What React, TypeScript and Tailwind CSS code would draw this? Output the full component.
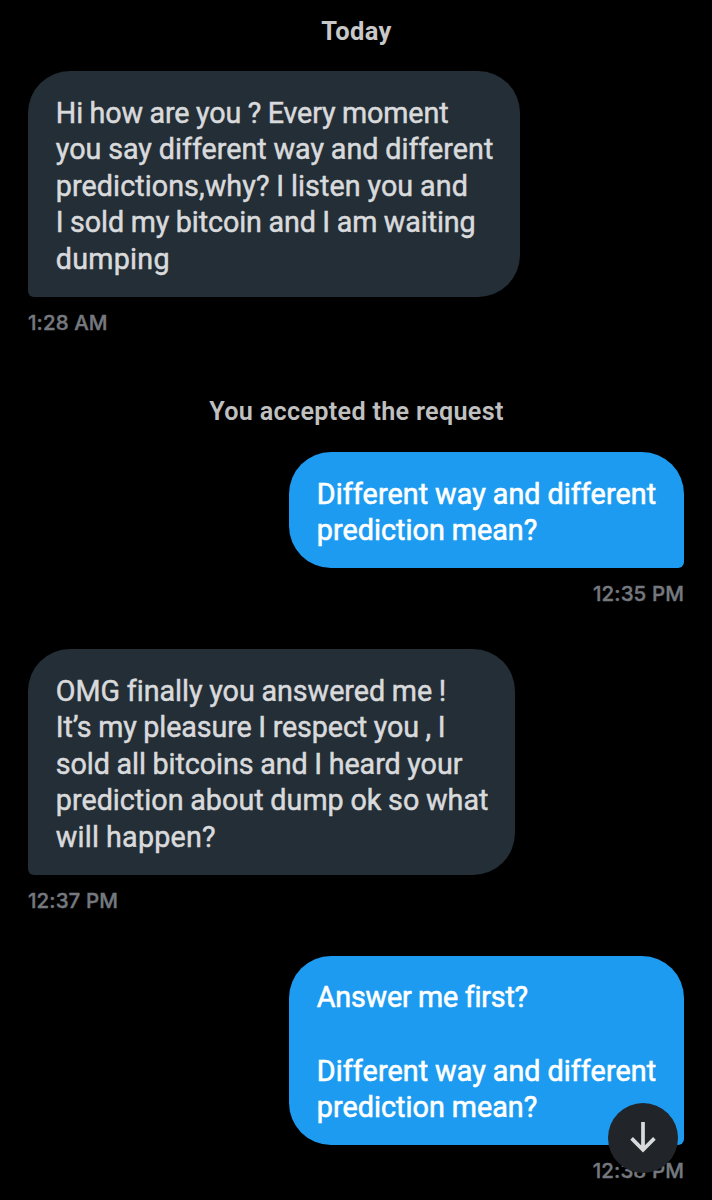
import clsx from "clsx";

interface TextLine {
  text: string;
  tracking?: string;
}

interface Message {
  sent?: boolean;
  lines: TextLine[];
  time: string;
  width: string;
}

const FIRST: Message = {
  lines: [
    { text: "Hi how are you ? Every moment", tracking: "tracking-[-0.13px]" },
    { text: "you say different way and different", tracking: "tracking-[0.02px]" },
    { text: "predictions,why? I listen you and", tracking: "tracking-[0.08px]" },
    { text: "I sold my bitcoin and I am waiting", tracking: "tracking-[-0.1px]" },
    { text: "dumping", tracking: "tracking-[0.26px]" },
  ],
  time: "1:28 AM",
  width: "w-[492px]",
};

const REPLIES: Message[] = [
  {
    sent: true,
    lines: [
      { text: "Different way and different", tracking: "tracking-[0.1px]" },
      { text: "prediction mean?", tracking: "tracking-[0.06px]" },
    ],
    time: "12:35 PM",
    width: "w-[395px]",
  },
  {
    lines: [
      { text: "OMG finally you answered me !", tracking: "tracking-[-0.02px]" },
      { text: "It’s my pleasure I respect you , I", tracking: "tracking-[-0.1px]" },
      { text: "sold all bitcoins and I heard your", tracking: "tracking-[-0.06px]" },
      { text: "prediction about dump ok so what", tracking: "tracking-[0.02px]" },
      { text: "will happen?", tracking: "tracking-[0.22px]" },
    ],
    time: "12:37 PM",
    width: "w-[487px]",
  },
  {
    sent: true,
    lines: [
      { text: "Answer me first?", tracking: "tracking-[-0.18px]" },
      { text: "" },
      { text: "Different way and different", tracking: "tracking-[0.1px]" },
      { text: "prediction mean?", tracking: "tracking-[0.06px]" },
    ],
    time: "12:38 PM",
    width: "w-[395px]",
  },
];

function Bubble({ sent, lines, time, width }: Message) {
  return (
    <div className={clsx("flex flex-col", sent ? "items-end" : "items-start")}>
      <div
        className={clsx(
          "rounded-[42px] pt-[23.7px] pb-[19.2px] pl-[27.8px] text-[28.7px] leading-[36.6px] whitespace-nowrap [word-spacing:-0.4px]",
          width,
          sent
            ? "rounded-br-[6px] bg-[#1d9bf0] text-white [-webkit-text-stroke:0.6px]"
            : "rounded-bl-[6px] bg-[#242e36] text-[#d9dadc] [-webkit-text-stroke:0.5px]"
        )}
      >
        {lines.map((line, i) => (
          <p key={i} className={clsx("h-[36.6px]", line.tracking)}>
            {line.text}
          </p>
        ))}
      </div>
      <p className="mt-3.5 font-[Inter,sans-serif] text-[20.5px] leading-6 font-medium tracking-[0.1px] text-[#75797f] [-webkit-text-stroke:0.4px]">
        {time}
      </p>
    </div>
  );
}

function ScrollDownButton() {
  return (
    <button
      aria-label="Scroll to bottom"
      className="absolute top-[1103px] left-[608px] flex size-[69.5px] items-center justify-center rounded-full bg-[#212428] pb-0.5"
    >
      <svg
        width="30"
        height="34"
        viewBox="0 0 30 34"
        fill="none"
        stroke="#d9dadc"
        strokeWidth="3.7"
      >
        <path d="M15 2V30M3.6 18.4L15 29.8L26.4 18.4" />
      </svg>
    </button>
  );
}

export default function App() {
  return (
    <main className="relative h-[1200px] w-[712px] overflow-hidden bg-black px-7 pt-[17px] font-[Roboto,sans-serif]">
      <h2 className="pl-px text-center text-[25.5px] leading-7 font-bold tracking-[0.4px] text-[#c8c8c8]">
        Today
      </h2>
      <div className="mt-[26px]">
        <Bubble {...FIRST} />
      </div>
      <p className="mt-[63px] pl-px text-center text-[25.2px] leading-7 font-semibold tracking-[0.3px] text-[#c0c0c0]">
        You accepted the request
      </p>
      <div className="mt-[26px] flex flex-col gap-[43px]">
        {REPLIES.map((message) => (
          <Bubble key={message.time} {...message} />
        ))}
      </div>
      <ScrollDownButton />
    </main>
  );
}
